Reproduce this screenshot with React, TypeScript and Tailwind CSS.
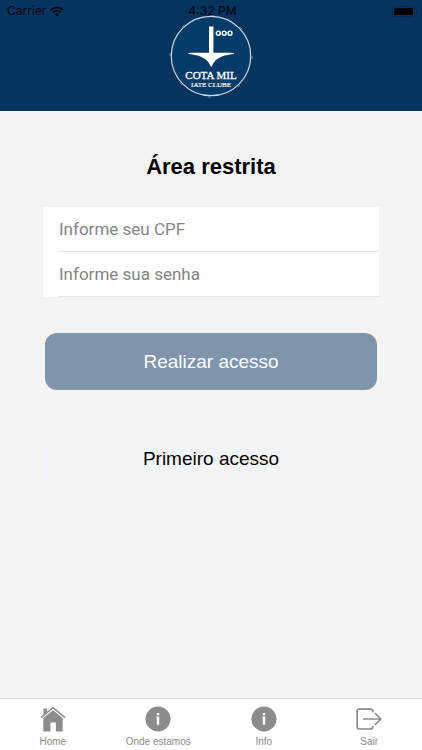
import React from "react";

const sans = "font-['Liberation_Sans',Arial,sans-serif]";
const system = "font-[Inter,'Liberation_Sans',sans-serif]";

function WifiIcon() {
  return (
    <svg width="14" height="11" viewBox="0 0 14 11" fill="none" stroke="currentColor" aria-hidden="true">
      <path d="M0.8 4a9 9 0 0 1 12.4 0" strokeWidth="2" />
      <path d="M3 6.4a5.8 5.8 0 0 1 8 0" strokeWidth="1.8" />
      <path d="M7 10.4L4.9 8.2a3 3 0 0 1 4.2 0z" fill="currentColor" stroke="none" />
    </svg>
  );
}

function BatteryIcon() {
  return (
    <svg width="26" height="11" viewBox="0 0 26 11" aria-hidden="true">
      <rect x="0.5" y="0.5" width="22" height="10" rx="2.5" fill="none" stroke="#042a4d" />
      <rect x="2" y="2" width="19" height="7" rx="1" fill="#000" />
      <path d="M24 3.8a2 2 0 0 1 0 3.4z" fill="#03203b" />
    </svg>
  );
}

function StatusBar() {
  return (
    <div className={`absolute inset-x-0 top-0 grid h-[22px] grid-cols-3 items-center pl-[7px] pr-1 text-[#020b16] ${system}`}>
      <div className="flex items-center gap-1 text-xs">
        <span>Carrier</span>
        <WifiIcon />
      </div>
      <span className="text-center text-xs font-medium">4:32 PM</span>
      <div className="flex justify-end">
        <BatteryIcon />
      </div>
    </div>
  );
}

function Logo() {
  return (
    <svg width="84" height="84" viewBox="0 0 84 84" role="img" aria-label="Cota Mil Iate Clube">
      <circle cx="42" cy="42" r="41" fill="none" stroke="#6f8eaa" strokeWidth="1" strokeDasharray="3 29.2" />
      <circle cx="42" cy="42" r="39.7" fill="#053b68" stroke="#c9d8e5" strokeWidth="1.2" />
      <path
        fill="#fff"
        d="M40 12.5h4.400v26.200c7 .3 14.500 0 20.600.3v.9c-9 .6-16.500 3.500-20 8.300-1.200 1.600-1.900 3.400-2.800 5-.9-1.600-1.600-3.400-2.800-5-3.500-4.800-11-7.700-20-8.300V39c6.100-.3 13.600 0 20.600-.3z"
      />
      <g fill="none" stroke="#fff" strokeWidth="1.400">
        <circle cx="49.300" cy="19.300" r="2" />
        <circle cx="55.200" cy="19.300" r="2" />
        <circle cx="61" cy="19.300" r="2" />
      </g>
      <g fill="#fff" textAnchor="middle" className="font-['Liberation_Serif',serif]">
        <text x="42" y="65" fontSize="11" stroke="#fff" strokeWidth="0.3">COTA MIL</text>
        <text x="42" y="73" fontSize="7" stroke="#fff" strokeWidth="0.2">IATE CLUBE</text>
      </g>
    </svg>
  );
}

function HomeIcon() {
  return (
    <svg width="26" height="26" viewBox="0 0 26 26" fill="#8c8c8c" aria-hidden="true">
      <path d="M3.500 2.500h3.600v3.300l-3.600 3.400z" />
      <path d="M.9 11.600L13 1.700l12.100 9.900" fill="none" stroke="#8c8c8c" strokeWidth="1.600" />
      <path d="M3.300 12.100L13 4.300l9.700 7.800v13.300h-6.800V16.600h-5.500v8.800H3.300z" />
    </svg>
  );
}

function InfoIcon() {
  return (
    <svg width="26" height="26" viewBox="0 0 26 26" aria-hidden="true">
      <circle cx="13" cy="13" r="12.500" fill="#8c8c8c" />
      <path d="M11.800 7h2.400v2.200h-2.400zM11.300 10.400h2.900v8.400h-2.400v-7.300h-.5z" fill="#fff" />
    </svg>
  );
}

function ExitIcon() {
  return (
    <svg width="26" height="26" viewBox="0 0 26 26" fill="none" stroke="#8c8c8c" strokeWidth="1.700" aria-hidden="true">
      <path d="M16.800 6.200V5.500a2.300 2.300 0 0 0-2.300-2.300H3.500a2.300 2.300 0 0 0-2.300 2.300v15.200A2.300 2.300 0 0 0 3.500 23h11a2.300 2.300 0 0 0 2.300-2.300V20" />
      <path d="M7 13h17.800M18.800 7l6 6-6 6" />
    </svg>
  );
}

const tabs = [
  { label: "Home", icon: <HomeIcon /> },
  { label: "Onde estamos", icon: <InfoIcon /> },
  { label: "Info", icon: <InfoIcon /> },
  { label: "Sair", icon: <ExitIcon /> },
];

const fields = [
  { id: "cpf", label: "Informe seu CPF", type: "text" },
  { id: "senha", label: "Informe sua senha", type: "password" },
];

export default function App() {
  return (
    <div className={`flex min-h-screen flex-col bg-[#f4f4f4] ${sans}`}>
      <header className="relative flex justify-center bg-[#05345f] pt-3.5 pb-[13px]">
        <Logo />
        <StatusBar />
      </header>

      <main className="flex-1 px-[43px] pt-10">
        <h1 className="text-center text-[22px] leading-8 font-bold text-black">Área restrita</h1>
        <form onSubmit={(e) => e.preventDefault()}>
          <div className="mt-6 bg-white pl-4">
            {fields.map((f) => (
              <label key={f.id} htmlFor={f.id} className="block border-b border-[#e4e4e4]">
                <input
                  id={f.id}
                  type={f.type}
                  aria-label={f.label}
                  placeholder={f.label}
                  className="block h-11 w-full bg-transparent font-[Roboto,'Liberation_Sans',sans-serif] text-[17px] text-black outline-none placeholder:text-[#858585]"
                />
              </label>
            ))}
          </div>
          <div className="mt-9 flex flex-col gap-10 px-0.5">
            <button type="submit" className="h-[57px] rounded-xl bg-[#7f95ab] pt-0.5 text-[19px] text-white">Realizar acesso</button>
            <button type="button" className="h-[57px] rounded-xl bg-[#f3f4f8] pt-0.5 text-[19px] text-black">Primeiro acesso</button>
          </div>
        </form>
      </main>

      <nav className="grid grid-cols-4 border-t border-[#dcdcdc] bg-white pt-[7px] pb-px">
        {tabs.map((t) => (
          <a key={t.label} href="#" className="flex flex-col items-center gap-[3px] text-[10px] leading-[14px] text-[#8c8c8c]">
            {t.icon}
            <span>{t.label}</span>
          </a>
        ))}
      </nav>
    </div>
  );
}
